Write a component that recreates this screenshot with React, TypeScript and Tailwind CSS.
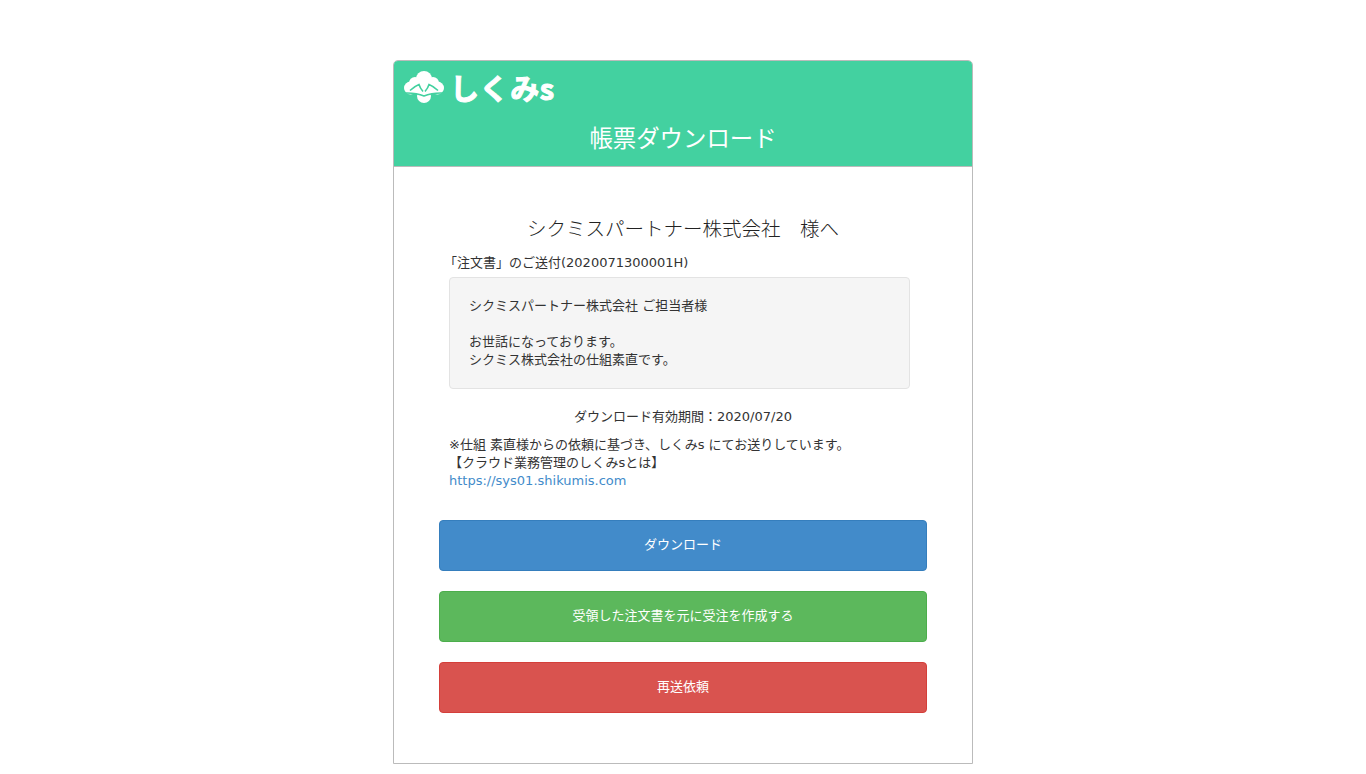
const rows = [
  { label: 'ダウンロード', cls: 'bg-[#428bca] border-[#357ebd]' },
  { label: '受領した注文書を元に受注を作成する', cls: 'bg-[#5cb85c] border-[#4cae4c]' },
  { label: '再送依頼', cls: 'bg-[#d9534f] border-[#d43f3a]' },
];

function CloudLogo() {
  return (
    <svg width="40" height="32" viewBox="0 0 40 32" className="shrink-0">
      <g fill="#fff">
        <circle cx="20" cy="8" r="8" />
        <circle cx="11" cy="12" r="6" />
        <circle cx="29" cy="12" r="6" />
        <circle cx="6.5" cy="17" r="6.5" />
        <circle cx="33.5" cy="17" r="6.5" />
        <circle cx="20" cy="25" r="7" />
        <rect x="6" y="10" width="28" height="13" />
      </g>
      <path
        fill="none"
        stroke="#43d1a0"
        strokeWidth="1.6"
        d="M0 22 Q12 21.5 20 25 Q28 21.5 40 22 M6 19.5 Q11 15 15 13.5 Q16 17 19 20.5 M34 19.5 Q29 15 25 13.5 Q24 17 21 20.5"
      />
    </svg>
  );
}

export default function App() {
  return (
    <div className="min-h-[774px] bg-white pt-[60px] font-['DejaVu_Sans','Noto_Sans_CJK_JP',sans-serif] text-[13px] text-[#333]">
      <div className="mx-auto w-[580px] border border-[#bbb] rounded-t-[5px] h-[704px]">
        <div className="bg-[#43d1a0] rounded-t-[4px] h-[105px] flex flex-col text-white">
          <div className="flex items-center gap-[6px] pl-[10px] pt-[2px] h-[50px]">
            <CloudLogo />
            <span className="text-[29px] font-bold leading-none tracking-[0.5px] [-webkit-text-stroke:1px_white] font-['Noto_Sans_CJK_JP',sans-serif]">しくみs</span>
          </div>
          <h1 className="text-center text-[23.4px] leading-[30px] mt-[11px] font-['Noto_Sans_CJK_JP',sans-serif] font-normal">帳票ダウンロード</h1>
        </div>
        <div className="border-t border-[#bbb] pt-[50px] px-[45px]">
          <h2 className="text-center text-[19.5px] leading-[26px] font-light text-[#222]">シクミスパートナー株式会社　様へ</h2>
          <p className="leading-5 mt-[10px] ml-[5px]">「注文書」のご送付(2020071300001H)</p>
          <div className="ml-[10px] mt-1 w-[461px] h-[112px] bg-[#f5f5f5] border border-[#e3e3e3] rounded pt-[19px] px-[19px] leading-[18px]">
            シクミスパートナー株式会社 ご担当者様
            <br />
            <br />
            お世話になっております。
            <br />
            シクミス株式会社の仕組素直です。
          </div>
          <p className="text-center leading-5 mt-[18px]">ダウンロード有効期間：2020/07/20</p>
          <div className="ml-[10px] mt-[9px] leading-[18px]">
            <p>※仕組 素直様からの依頼に基づき、しくみs にてお送りしています。</p>
            <p>【クラウド業務管理のしくみsとは】</p>
            <a className="text-[#428bca]" href="#">https://sys01.shikumis.com</a>
          </div>
          <div className="mt-[30px] flex flex-col gap-5">
            {rows.map(r => (
              <button key={r.label} className={`h-[51px] w-[488px] rounded border pb-[2px] text-white ${r.cls}`}>
                {r.label}
              </button>
            ))}
          </div>
        </div>
      </div>
    </div>
  );
}
